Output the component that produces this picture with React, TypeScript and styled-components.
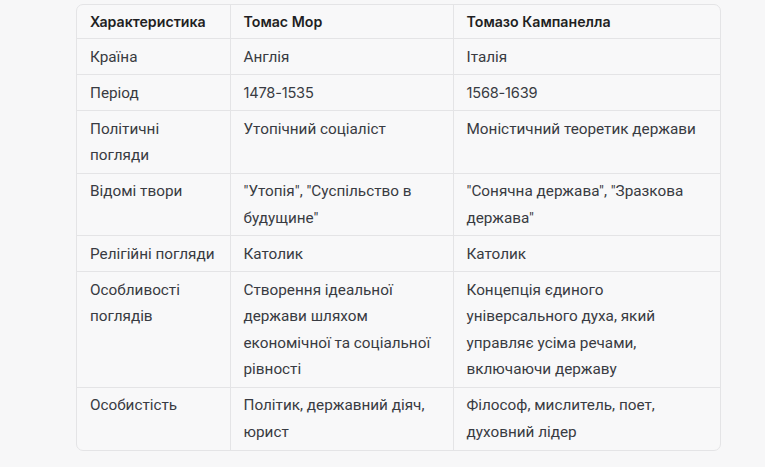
import type { FC, ReactNode } from "react";
import styled, { createGlobalStyle } from "styled-components";

const GlobalStyle = createGlobalStyle`
  html, body {
    margin: 0;
    background: #f7f7f8;
  }
`;

const Page = styled.main`
  padding: 4px 0 0 76px;
  font-family: Roboto, "Noto Sans", sans-serif;
  color: #383b42;
`;

const Frame = styled.div`
  width: 645px;
  border: 1px solid #e4e4e6;
  border-radius: 7px;
  overflow: hidden;
  background: #f8f8f9;
  box-sizing: border-box;
`;

const Table = styled.table`
  width: 100%;
  border-collapse: collapse;
  table-layout: fixed;
  font-size: 15.3px;
  line-height: 26.6px;
`;

const HeadCell = styled.th`
  text-align: left;
  font-family: Inter, "Noto Sans", sans-serif;
  font-weight: 600;
  font-size: 14.2px;
  color: #1f1f23;
  padding: 3.5px 14px 3.3px 13px;
  border-left: 1px solid #e4e4e6;
  border-bottom: 1px solid #e4e4e6;
  &:first-child {
    border-left: none;
  }
`;

const Cell = styled.td`
  vertical-align: top;
  padding: 4.2px 12px 4.2px 13px;
  border-left: 1px solid #e4e4e6;
  border-top: 1px solid #e4e4e6;
  &:first-child {
    border-left: none;
  }
`;

const Num = styled.span`
  font-family: Inter, sans-serif;
  font-size: 14.6px;
  letter-spacing: -0.2px;
`;

const rows: [string, ReactNode, ReactNode][] = [
  ["Країна", "Англія", "Італія"],
  ["Період", <Num>1478-1535</Num>, <Num>1568-1639</Num>],
  ["Політичні погляди", "Утопічний соціаліст", "Моністичний теоретик держави"],
  [
    "Відомі твори",
    "\"Утопія\", \"Суспільство в будущине\"",
    "\"Сонячна держава\", \"Зразкова держава\"",
  ],
  ["Релігійні погляди", "Католик", "Католик"],
  [
    "Особливості поглядів",
    "Створення ідеальної держави шляхом економічної та соціальної рівності",
    "Концепція єдиного універсального духа, який управляє усіма речами, включаючи державу",
  ],
  ["Особистість", "Політик, державний діяч, юрист", "Філософ, мислитель, поет, духовний лідер"],
];

const App: FC = () => {
  return (
    <Page>
      <GlobalStyle />
      <Frame>
        <Table>
          <colgroup>
            <col style={{ width: 153 }} />
            <col style={{ width: 223 }} />
            <col />
          </colgroup>
          <thead>
            <tr>
              <HeadCell>Характеристика</HeadCell>
              <HeadCell>Томас Мор</HeadCell>
              <HeadCell>Томазо Кампанелла</HeadCell>
            </tr>
          </thead>
          <tbody>
            {rows.map((r) => (
              <tr key={r[0]}>
                <Cell>{r[0]}</Cell>
                <Cell>{r[1]}</Cell>
                <Cell>{r[2]}</Cell>
              </tr>
            ))}
          </tbody>
        </Table>
      </Frame>
    </Page>
  );
};

export default App;
